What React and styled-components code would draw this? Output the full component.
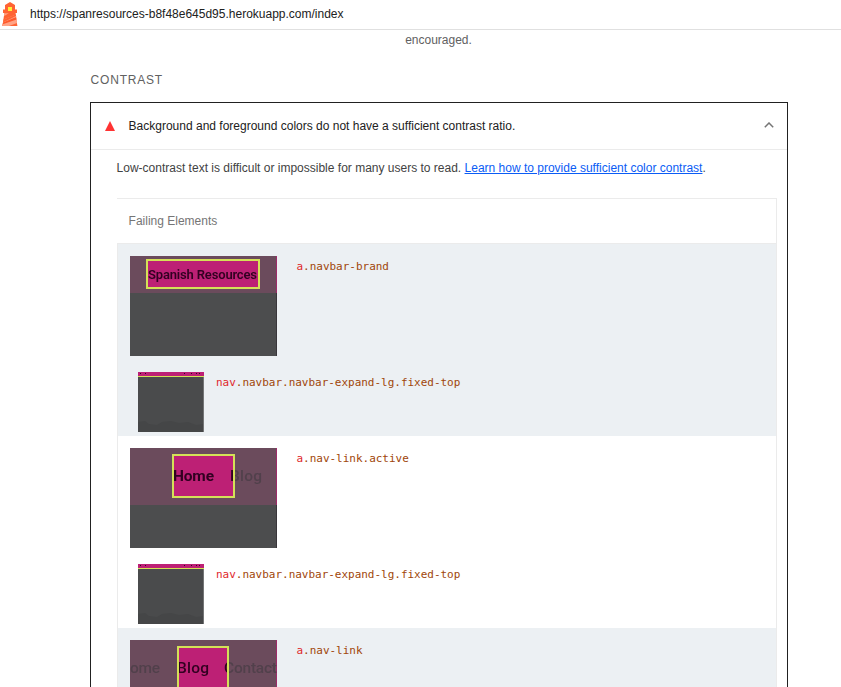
import React from "react";
import styled, { createGlobalStyle } from "styled-components";

const GlobalStyle = createGlobalStyle`
  * { box-sizing: border-box; }
  html, body { margin: 0; height: 100%; overflow: hidden; background: #fff; }
  body { font: 12px/18px "Liberation Sans", Arial, sans-serif; color: #424242; }
`;

const Page = styled.div`
  height: 687px;
  overflow: hidden;
  display: flex;
  flex-direction: column;
`;

const Topbar = styled.header`
  flex: none;
  height: 30px;
  display: flex;
  align-items: center;
  padding: 0 0 2px 2px;
  gap: 12px;
  color: #212121;
  border-bottom: 1px solid #e0e0e0;
`;

const Logo = styled.svg`
  display: block;
  width: 16px;
  height: 24px;
`;

const Line = styled.span`
  white-space: nowrap;
  letter-spacing: ${(p) => p.$spacing || "0"};
`;

const Report = styled.main`
  width: 698px;
  margin-left: 90px;
  display: flex;
  flex-direction: column;
`;

const CategoryNote = styled.p`
  margin: 1px 1px 0 0;
  text-align: center;
  color: #616161;
`;

const GroupTitle = styled.h3`
  margin: 22px 0 13px 0.6px;
  font-size: 12px;
  line-height: 18px;
  font-weight: 400;
  color: #616161;
`;

const Audit = styled.section`
  height: 640px;
  border: 1px solid #212121;
`;

const AuditHeader = styled.div`
  display: flex;
  align-items: center;
  height: 47px;
  padding: 0 13px 0 14px;
  color: #212121;
  border-bottom: 1px solid #ebebeb;
`;

const FailIcon = styled.span`
  width: 0;
  border: 5px solid transparent;
  border-top: 0;
  border-bottom: 10px solid #f33;
  margin-right: 13.6px;
`;

const Chevron = styled.svg`
  margin-left: auto;
  width: 10px;
  height: 6px;
  position: relative;
  top: -1px;
`;

const Description = styled.p`
  margin: 9px 0 21px 25.6px;
`;

const Link = styled.a`
  color: #0b5cf5;
  text-decoration: underline;
`;

const Table = styled.div`
  width: 660px;
  margin-left: 26px;
  border-top: 1px solid #ebebeb;
  border-right: 1px solid #ebebeb;
`;

const TableHead = styled.div`
  height: 44px;
  padding: 13px 11.6px;
  color: #757575;
`;

const Row = styled.div`
  height: 192px;
  padding: 12px 12px 0;
  border-left: 1px solid #ebebeb;
  display: flex;
  flex-direction: column;
  gap: 16px;
  background: ${(p) => (p.$shaded ? "#ecf0f3" : "#fff")};
`;

const Rows = styled.div`
  border-top: 1px solid #ebebeb;
`;

const Element = styled.div`
  display: flex;
  gap: ${(p) => (p.$nested ? "12px" : "19.5px")};
  padding-left: ${(p) => (p.$nested ? "8px" : "0")};
`;

const Thumb = styled.svg`
  display: block;
  flex: none;
`;

const Selector = styled.code`
  margin-top: 3px;
  font: 11px/16px "DejaVu Sans Mono", monospace;
  letter-spacing: -0.02px;
  color: #a0460a;
  white-space: nowrap;
`;

const Tag = styled.span`
  color: #e0282c;
`;

const ShotText = styled.text`
  font-family: Roboto, sans-serif;
  font-weight: ${(p) => p.$weight || 500};
  font-size: ${(p) => p.$size}px;
`;

function Lighthouse() {
  return (
    <Logo viewBox="0 0 16 24">
      <path d="M8 0l5 3v4.5h2V11h-1.6l2 13H.4l2-13H1V7.500h2V3z" fill="#ff6434" />
      <path d="M2.300 14.600L8 11.300h5.400l.3 1.700-11.700 5z" fill="#ff6434" />
      <path d="M2 12.800l.3-1.500h4.500L2.200 14z" fill="#ffa385" />
      <path d="M1.100 20l12.800-6.200.6 3.700L.5 23.700z" fill="#ff5a2c" />
      <path d="M1.500 17.500l-.5 3L14.300 15l-.4-2.500zM.7 22.200l13.900-4.700.5 3.500L7 24H.4z" fill="#ffa385" />
      <path d="M1.500 17.500l12.300-5 .3 1.500L1 20.500z" fill="#ff6434" />
      <path d="M6 5h4v4H6z" fill="#fff03a" />
    </Logo>
  );
}

function Shot({ id, navHeight, box, children }) {
  const [x, y, w, h] = box;
  return (
    <Thumb width="147" height="100" viewBox="0 0 147 100">
      <defs>
        <clipPath id={`${id}-in`}><rect x={x} y={y} width={w} height={h} /></clipPath>
        <filter id={`${id}-soft`}><feGaussianBlur stdDeviation="0.45" /></filter>
      </defs>
      <rect width="147" height="100" fill="#4c4d4e" />
      <rect width="147" height={navHeight} fill="#6b4b5c" />
      <rect x="146" width="1" height={navHeight} fill="#9d2b69" />
      <rect x="146" y={navHeight} width="1" height="100" fill="#39363b" />
      <g fill="#51404b" filter={`url(#${id}-soft)`}>{children}</g>
      <rect x={x} y={y} width={w} height={h} fill="#bd2075" />
      <g clipPath={`url(#${id}-in)`}>
        <g fill="#310620" filter={`url(#${id}-soft)`}>{children}</g>
      </g>
      <rect x={x} y={y} width={w} height={h} fill="none" stroke="#d4e157" strokeWidth="2" />
    </Thumb>
  );
}

function NavShot() {
  return (
    <Thumb width="66" height="60" viewBox="0 0 66 60">
      <rect width="66" height="60" fill="#4a4b4c" />
      <path d="M0 50l7-1 4 3 8 1 5-3 9-1 8 2 9-1 8 3 8-1v8H0z" fill="#454647" />
      <rect width="66" height="4" fill="#bd2075" />
      <path d="M2 1.5h1M7 1.5h1M46 1.5h1M53 1.5h1M58 1.5h1M61 1.5h1" stroke="#310620" />
      <rect y="4" width="66" height="1" fill="#d4e157" />
      <rect x="65" y="5" width="1" height="55" fill="#747576" />
    </Thumb>
  );
}

const shots = {
  brand: (
    <Shot id="brand" navHeight={37} box={[17, 4, 112, 28]}>
      <ShotText $size={13} $weight={600} x="18" y="23" textLength="109">Spanish Resources</ShotText>
    </Shot>
  ),
  home: (
    <Shot id="home" navHeight={57} box={[43, 7, 61, 42]}>
      <ShotText $size={15.5} $weight={700} x="43" y="33" textLength="41">Home</ShotText>
      <ShotText $size={15.5} $weight={500} x="100" y="33" textLength="32">Blog</ShotText>
    </Shot>
  ),
  blog: (
    <Shot id="blog" navHeight={57} box={[48, 7, 50, 42]}>
      <ShotText $size={15.5} $weight={500} x="0" y="33" textLength="30">ome</ShotText>
      <ShotText $size={15.5} $weight={500} x="47" y="33" textLength="32">Blog</ShotText>
      <ShotText $size={15.5} $weight={500} x="94" y="33" textLength="53">Contact</ShotText>
    </Shot>
  ),
};

const items = [
  { shot: "brand", path: ".navbar-brand" },
  { shot: "home", path: ".nav-link.active" },
  { shot: "blog", path: ".nav-link" },
];

export default function App() {
  return (
    <Page>
      <GlobalStyle />
      <Topbar>
        <Lighthouse />
        <Line>https://spanresources-b8f48e645d95.herokuapp.com/index</Line>
      </Topbar>
      <Report>
        <CategoryNote>encouraged.</CategoryNote>
        <GroupTitle><Line $spacing="0.8px">CONTRAST</Line></GroupTitle>
        <Audit>
          <AuditHeader>
            <FailIcon />
            <Line>Background and foreground colors do not have a sufficient contrast ratio.</Line>
            <Chevron viewBox="0 0 10 6">
              <path d="M.8 5.2L5 1l4.2 4.2" fill="none" stroke="#757575" strokeWidth="1.5" />
            </Chevron>
          </AuditHeader>
          <Description>
            <Line>
              Low-contrast text is difficult or impossible for many users to read.{" "}
              <Link>Learn how to provide sufficient color contrast</Link>.
            </Line>
          </Description>
          <Table>
            <TableHead>Failing Elements</TableHead>
            <Rows>
              {items.map((item, i) => (
                <Row key={item.shot} $shaded={i % 2 === 0}>
                  <Element>
                    {shots[item.shot]}
                    <Selector><Tag>a</Tag>{item.path}</Selector>
                  </Element>
                  <Element $nested>
                    <NavShot />
                    <Selector><Tag>nav</Tag>.navbar.navbar-expand-lg.fixed-top</Selector>
                  </Element>
                </Row>
              ))}
            </Rows>
          </Table>
        </Audit>
      </Report>
    </Page>
  );
}
